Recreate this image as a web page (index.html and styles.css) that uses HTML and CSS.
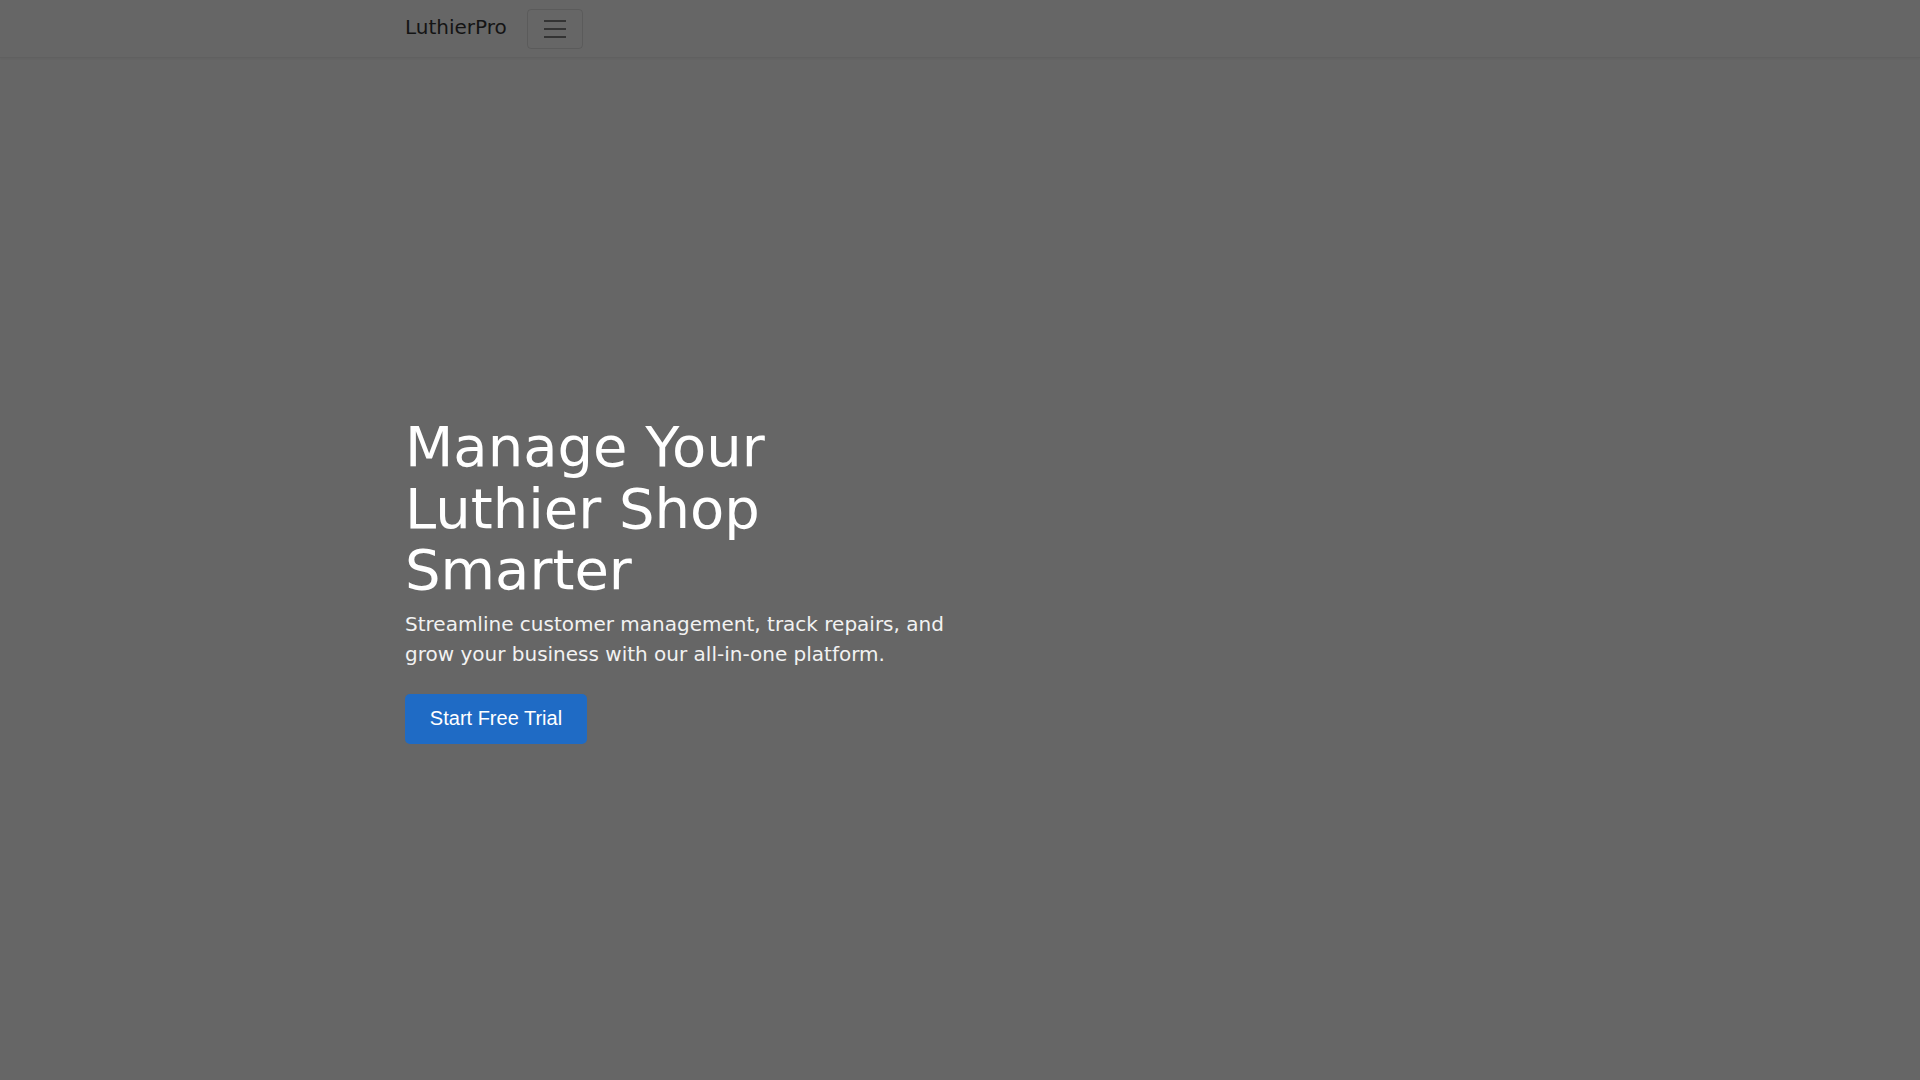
FILE: index.html
```html
<!DOCTYPE html>
<html lang="en">
<head>
<meta charset="utf-8">
<title>LuthierPro</title>
<link rel="stylesheet" href="styles.css">
</head>
<body>
<nav class="navbar">
  <div class="container nav-inner">
    <a class="brand" href="#">LuthierPro</a>
    <button class="toggler" type="button" aria-label="Toggle navigation">
      <svg width="30" height="30" viewBox="0 0 30 30" aria-hidden="true"><path d="M4 7h22M4 15h22M4 23h22" stroke="rgba(0,0,0,0.5)" stroke-width="2" stroke-linecap="butt" fill="none"/></svg>
    </button>
  </div>
</nav>
<section class="hero">
  <div class="container">
    <div class="hero-col">
      <h1 class="hero-title">Manage Your Luthier Shop Smarter</h1>
      <p class="hero-lead">Streamline customer management, track repairs, and grow your business with our all-in-one platform.</p>
      <a class="btn-primary" href="#">Start Free Trial</a>
    </div>
  </div>
</section>
</body>
</html>
```
FILE: styles.css
```css
* { box-sizing: border-box; }
html, body { margin: 0; padding: 0; }
body {
  background: #666666;
  font-family: "DejaVu Sans", sans-serif;
  color: #fff;
  height: 1080px;
  overflow: hidden;
}
.container {
  max-width: 1140px;
  margin: 0 auto;
  padding: 0 15px;
}
.navbar {
  height: 58px;
  border-bottom: 1px solid rgba(0,0,0,0.05);
  box-shadow: 0 1px 2px rgba(0,0,0,0.04);
}
.nav-inner {
  display: flex;
  align-items: center;
  height: 56px;
}
.brand {
  font-size: 20px;
  line-height: 30px;
  color: #141414;
  text-decoration: none;
  margin-right: 20px;
  margin-top: -3px;
}
.toggler {
  width: 56px;
  height: 40px;
  padding: 4px 12px;
  background: transparent;
  border: 1px solid rgba(0,0,0,0.1);
  border-radius: 4px;
  display: flex;
  align-items: center;
  justify-content: center;
  margin-top: 1px;
}
.toggler svg { display: block; }
.hero {
  padding-top: 358px;
}
.hero-col {
  width: 540px;
}
.hero-title {
  font-size: 56px;
  line-height: 61.6px;
  font-weight: 400;
  margin: 0 0 8px;
  color: #fff;
}
.hero-lead {
  font-size: 20px;
  line-height: 30.5px;
  margin: 0 0 24px;
  color: #f2f2f2;
}
.btn-primary {
  display: inline-flex;
  align-items: center;
  justify-content: center;
  width: 182px;
  height: 50px;
  background: #1f6bc5;
  color: #fff;
  font-family: "Liberation Sans", Arial, sans-serif;
  font-size: 20px;
  text-decoration: none;
  border-radius: 5px;
}
```
